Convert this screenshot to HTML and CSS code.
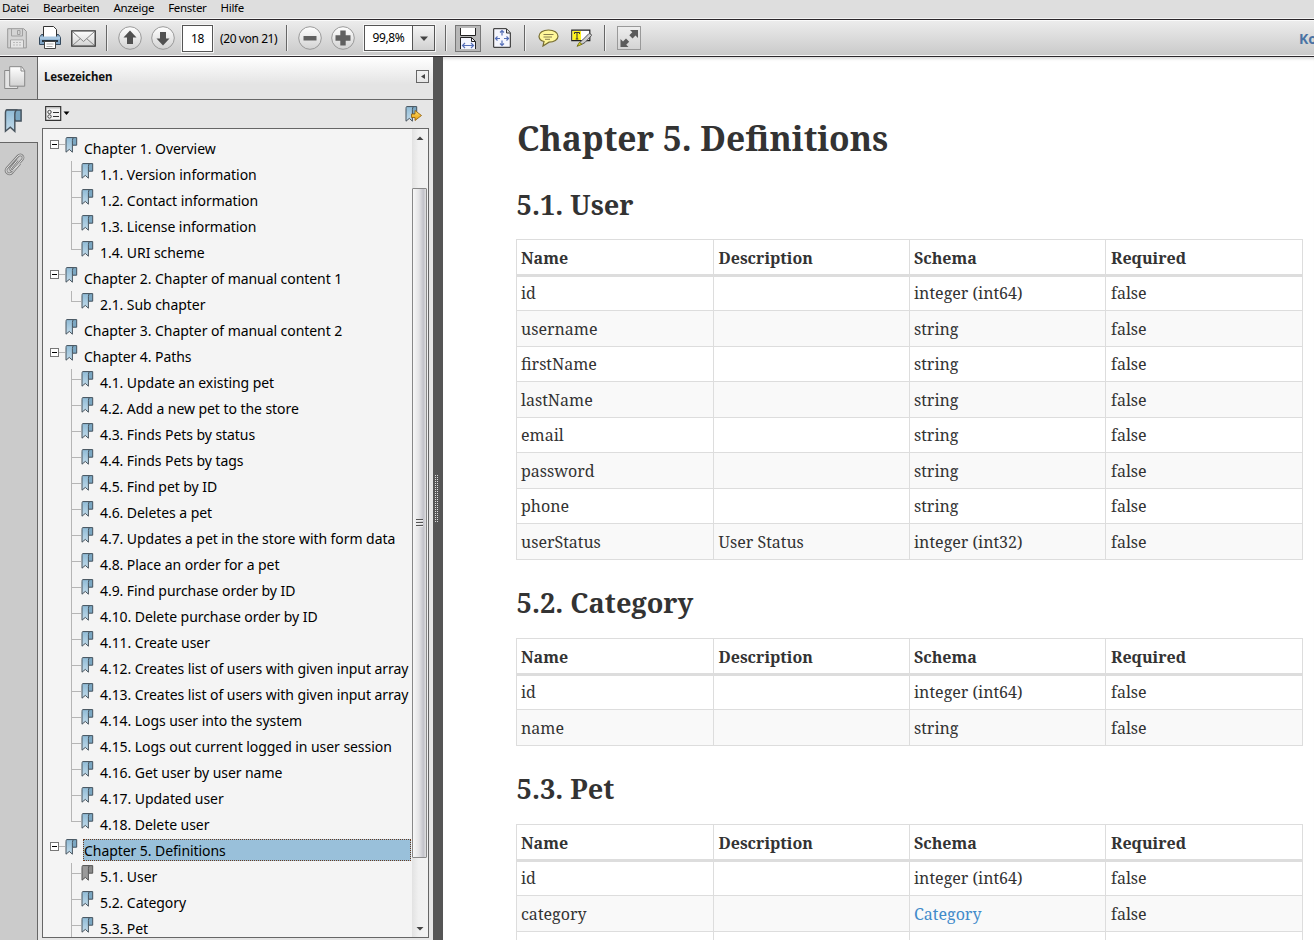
FILE: index.html
```html
<!DOCTYPE html>
<html lang="de">
<head>
<meta charset="utf-8">
<title>Definitions</title>
<link rel="stylesheet" href="styles.css">
</head>
<body>
<svg class="defs" width="0" height="0" aria-hidden="true">
  <defs>
    <linearGradient id="blue" x1="0" y1="0" x2="0" y2="1"><stop offset="0" stop-color="#8fbbd6"/><stop offset="1" stop-color="#c3dbea"/></linearGradient>
    <linearGradient id="silver" x1="0" y1="0" x2="0" y2="1"><stop offset="0" stop-color="#fff"/><stop offset="1" stop-color="#d2d2d2"/></linearGradient>
    <linearGradient id="gold" x1="0" y1="0" x2="0" y2="1"><stop offset="0" stop-color="#ffe06a"/><stop offset="1" stop-color="#e59b0c"/></linearGradient>
    <symbol id="mark" viewBox="0 0 13 17">
      <path class="fold" d="M2.500 .6h9.200v7.600H8z"/>
      <path class="ribbon" d="M1.600 .6h6.800q-1 1.200-1 3v11.600L4.300 12.400 1 15.200V2.500q0-1.200.6-1.900z"/>
    </symbol>
  </defs>
</svg>
<nav class="menu"><span>Datei</span><span>Bearbeiten</span><span>Anzeige</span><span>Fenster</span><span>Hilfe</span></nav>
<div class="toolbar">
  <svg class="ic save" width="20" height="21" viewBox="0 0 20 21"><path d="M.7 .7h16l2.600 2.600v16.600H.7z" fill="#d4d4d4" stroke="#999"/><path d="M4.500 1v7h11V1M10.500 2.500h2.500v4h-2.500zM3.500 20v-8h13v8" fill="none" stroke="#a0a0a0"/><path d="M4 12.500h12v7H4z" fill="#e6e6e6"/><path d="M6 14.500h8M6 17h8" stroke="#bbb" stroke-dasharray="2 1"/></svg>
  <svg class="ic print" width="22" height="24" viewBox="0 0 22 24"><path d="M2.500 8.500h17l2 3v7h-21v-7z" fill="#7fa3c4" stroke="#34495d"/><path d="M4.500 .5h10l3 3v8h-13z" fill="#fff" stroke="#333"/><path d="M1 10.500h20v3H1z" fill="#a9c7e0"/><path d="M3 14h16v2H3z" fill="#26323d"/><path d="M5.500 15.500h11v7h-11z" fill="#fff" stroke="#444"/><path d="M7.500 18h7M7.500 20.500h6" stroke="#aaa"/></svg>
  <svg class="ic mail" width="25" height="17" viewBox="0 0 25 17"><path d="M.8 .8h23.400v15.400H.8z" fill="url(#silver)" stroke="#333" stroke-width="1.300"/><path d="M2 2l10.500 9.500L23 2M2 15l7.500-6.500M23 15l-7.500-6.500" fill="none" stroke="#888"/></svg>
  <i class="sep s1"></i>
  <svg class="ic up" width="24" height="24" viewBox="0 0 24 24"><circle cx="12" cy="12" r="11.300" fill="url(#silver)" stroke="#999"/><path d="M12 4.500l6.500 7H15v6.500H9v-6.500H5.500z" fill="#505050"/></svg>
  <svg class="ic down" width="24" height="24" viewBox="0 0 24 24"><circle cx="12" cy="12" r="11.300" fill="url(#silver)" stroke="#999"/><path d="M12 19.500l6.500-7H15V6H9v6.500H5.500z" fill="#505050"/></svg>
  <span class="pageno">18</span><span class="total">(20 von 21)</span>
  <i class="sep s2"></i>
  <svg class="ic minus" width="24" height="24" viewBox="0 0 24 24"><circle cx="12" cy="12" r="11.300" fill="url(#silver)" stroke="#999"/><path d="M5.500 10h13v4.500h-13z" fill="#606060"/></svg>
  <svg class="ic plus" width="24" height="24" viewBox="0 0 24 24"><circle cx="12" cy="12" r="11.300" fill="url(#silver)" stroke="#999"/><path d="M9.300 4.500h5.400v4.800h4.800v5.400h-4.800v4.800H9.300v-4.800H4.500V9.300h4.800z" fill="#606060"/></svg>
  <span class="zoom"><span class="zoom-value">99,8%</span><span class="zoom-drop"><svg width="8" height="5"><path d="M0 .5h8L4 5z" fill="#444"/></svg></span></span>
  <i class="sep s3"></i>
  <span class="toggle"><svg width="18" height="21" viewBox="0 0 18 21"><path d="M1.500 0v7.500h15V0" fill="#fff" stroke="#222"/><path d="M1.500 21V9.500h11l4 4V21z" fill="#f4f6ff"/><path d="M1.500 21V9.500h11l4 4V21M12.500 9.500v4h4" fill="none" stroke="#222"/><path d="M3.500 17.500h11M6 15l-2.500 2.500L6 20M12 15l2.500 2.500L12 20" fill="none" stroke="#5670b8" stroke-width="1.200"/></svg></span>
  <svg class="ic fit" width="18" height="20" viewBox="0 0 18 20"><path d="M.7 .7h12.800l3.800 4v14.600H.7z" fill="#f5f6fd" stroke="#222"/><path d="M13.500 1v4H17" fill="#ddd" stroke="#333"/><path d="M9 2.500v5M9 17.500v-5M2.500 10.500h4.500M15.500 10.500H11M7 4.500l2-2 2 2M7 15.500l2 2 2-2M4.500 8.500l-2 2 2 2M13.500 8.500l2 2-2 2" fill="none" stroke="#5670b8" stroke-width="1.200"/></svg>
  <i class="sep s4"></i>
  <svg class="ic note" width="21" height="18" viewBox="0 0 21 18"><path d="M10.500 1C16 1 20 3.700 20 7.200s-4 6-9 6L5 17l1-4.500C3 11.700 1 9.800 1 7.200 1 3.700 5 1 10.500 1z" fill="#fff79a" stroke="#776d32" stroke-width="1.200"/><path d="M5.500 5.500h10M5.500 8h8.500M7 10.300h5" stroke="#8a8150"/></svg>
  <svg class="ic mark-text" width="22" height="18" viewBox="0 0 22 18"><path d="M.8 1.200h18v10.500H.8z" fill="#fff" stroke="#222" stroke-width="1.200"/><path d="M1.500 2H10v9H1.500z" fill="#fff21c"/><path d="M3.500 5V3.500h5V5M6 3.500v6.500M4.700 10h2.600" fill="none" stroke="#333"/><path d="M8.500 13.500l3-2.500 6.500-6.500q2.500 0 2.500 2l-6.500 7-3.500 2z" fill="#ccc" stroke="#555"/><path d="M6 17.300l2.500-4 2.500 2z" fill="#ece51d" stroke="#77731a"/></svg>
  <i class="sep s5"></i>
  <span class="expand"><svg width="20" height="20" viewBox="0 0 20 20"><path d="M11 2h8v8l-2.500-2.500-3 3-3.200-3.200 3-3zM1.500 19v-8L4 13.500l3-3 3.200 3.200-3 3L9.500 19z" fill="#5c5c5c"/></svg></span>
  <span class="comment">Ko</span>
</div>
<div class="workspace">
  <aside class="rail">
    <div class="rail-tab"><svg width="22" height="24" viewBox="0 0 22 24"><path d="M.7 4.500h13v18H.7z" fill="#e4e4e4" stroke="#888"/><path d="M5.700 .7h12l3 4v15.500h-15z" fill="url(#silver)" stroke="#888"/><path d="M17 1v4h4" fill="none" stroke="#888"/></svg></div>
    <div class="rail-tab active"><svg class="big-mark" width="19" height="25" viewBox="0 0 13 17"><use href="#mark"/></svg></div>
    <div class="rail-tab clip"><svg width="22" height="24" viewBox="0 0 22 24"><path d="M13.500 7L7 15c-1.200 1.700.9 3.500 2.300 2l9-10.500c2.500-3.200-1.700-6.300-4.300-3.500L3 15c-3 4 2 8 5.300 4.500L16 10.500" fill="none" stroke="#808080" stroke-width="2.600"/><path d="M13.500 7L7 15c-1.200 1.700.9 3.500 2.300 2l9-10.500c2.500-3.200-1.700-6.300-4.300-3.500L3 15c-3 4 2 8 5.300 4.500L16 10.500" fill="none" stroke="#e2e2e2" stroke-width="1"/></svg></div>
  </aside>
  <section class="panel">
    <header class="panel-head"><b>Lesezeichen</b><span class="collapse"><svg width="4" height="5"><path d="M4 0v5L0 2.500z" fill="#444"/></svg></span></header>
    <div class="panel-tools">
      <svg width="25" height="15" viewBox="0 0 25 15"><path d="M.7 .7h15v13.600H.7z" fill="#f4f4f4" stroke="#333" stroke-width="1.200"/><path d="M1 2h14" stroke="#bbb"/><path d="M8 6.500h6M8 10.500h6" stroke="#333"/><circle cx="4.500" cy="6" r="1.700" fill="none" stroke="#444"/><circle cx="4.500" cy="10.500" r="1.700" fill="none" stroke="#444"/><path d="M18.500 5.500h6l-3 3.500z"/></svg>
      <svg class="go" width="17" height="17" viewBox="0 0 17 17"><use href="#mark" width="13" height="17"/><path d="M6.500 8H10V4.500L16.500 9.500 10 14.500V11.500H6.500z" fill="url(#gold)" stroke="#8b5b0a" stroke-width=".8"/></svg>
    </div>
    <div class="tree-box">
      <ul class="tree" id="tree"></ul>
      <div class="scroll">
        <svg width="8" height="4"><path d="M.5 4h7L4 .5z" fill="#444"/></svg>
        <div class="thumb"><i></i><i></i><i></i></div>
        <svg class="arrow-down" width="8" height="4"><path d="M.5 0h7L4 3.500z" fill="#444"/></svg>
      </div>
    </div>
  </section>
  <div class="splitter"><i></i></div>
  <main class="page">
    <h1>Chapter 5. Definitions</h1>
    <h2 class="h-user">5.1. User</h2>
    <table>
      <thead><tr><th>Name</th><th>Description</th><th>Schema</th><th>Required</th></tr></thead>
      <tbody>
        <tr><td>id</td><td></td><td>integer (int64)</td><td>false</td></tr>
        <tr><td>username</td><td></td><td>string</td><td>false</td></tr>
        <tr><td>firstName</td><td></td><td>string</td><td>false</td></tr>
        <tr><td>lastName</td><td></td><td>string</td><td>false</td></tr>
        <tr><td>email</td><td></td><td>string</td><td>false</td></tr>
        <tr><td>password</td><td></td><td>string</td><td>false</td></tr>
        <tr><td>phone</td><td></td><td>string</td><td>false</td></tr>
        <tr><td>userStatus</td><td>User Status</td><td>integer (int32)</td><td>false</td></tr>
      </tbody>
    </table>
    <h2>5.2. Category</h2>
    <table>
      <thead><tr><th>Name</th><th>Description</th><th>Schema</th><th>Required</th></tr></thead>
      <tbody>
        <tr><td>id</td><td></td><td>integer (int64)</td><td>false</td></tr>
        <tr><td>name</td><td></td><td>string</td><td>false</td></tr>
      </tbody>
    </table>
    <h2>5.3. Pet</h2>
    <table>
      <thead><tr><th>Name</th><th>Description</th><th>Schema</th><th>Required</th></tr></thead>
      <tbody>
        <tr><td>id</td><td></td><td>integer (int64)</td><td>false</td></tr>
        <tr><td>category</td><td></td><td><a>Category</a></td><td>false</td></tr>
        <tr><td></td><td></td><td></td><td></td></tr>
      </tbody>
    </table>
  </main>
</div>
<script src="tree.js"></script>
</body>
</html>
```

FILE: styles.css
```css
* { box-sizing: border-box; }
body { margin: 0; width: 1314px; height: 940px; overflow: hidden; background: #fff; display: flex; flex-direction: column; font-family: "Noto Sans", sans-serif; }
svg { display: block; flex: none; }
i { font-style: normal; }
.defs { position: absolute; }
.menu { height: 20px; flex: none; background: #dedede; border-bottom: 1px solid #2b272b; box-shadow: inset 0 -1px #f4f4f4; display: flex; gap: 14px; padding-left: 2px; font: 11.5px/16px "Noto Sans", sans-serif; letter-spacing: -.3px; color: #000; }
.toolbar { height: 37px; flex: none; display: flex; align-items: center; background: linear-gradient(#ededed, #c9c9c9); border-bottom: 1px solid #2b272b; box-shadow: inset 0 1px #fafafa, inset 0 -1px #f7f7f7; padding-left: 7px; white-space: nowrap; overflow: hidden; }
.ic { margin-right: 9px; }
.save { margin-right: 12px; }
.print { margin-right: 10px; }
.mail { margin-right: 10px; }
.sep { width: 2px; height: 26px; background: #666; border-right: 1px solid #f0f0f0; flex: none; }
.s1 { margin-right: 10px; }
.down { margin-right: 7px; }
.pageno { width: 31px; height: 27px; border: 1px solid #555; outline: 1px solid #f5f5f5; background: #fff; font-size: 12px; line-height: 25px; text-align: center; letter-spacing: -.3px; flex: none; }
.total { font-size: 12px; width: 66px; margin-left: 7px; letter-spacing: -.4px; flex: none; }
.s2 { margin-right: 10px; }
.plus { margin-right: 9px; }
.zoom { width: 71px; height: 26px; border: 1px solid #555; outline: 1px solid #f5f5f5; background: #fff; display: flex; flex: none; }
.zoom-value { width: 48px; font-size: 12px; line-height: 24px; text-align: center; letter-spacing: -.4px; border-right: 1px solid #555; }
.zoom-drop { flex: 1; display: flex; align-items: center; justify-content: center; background: linear-gradient(#f4f4f4, #d0d0d0); }
.s3 { margin: 0 8px 0 10px; }
.toggle { width: 26px; height: 27px; background: #b8b8b8; border: 1px solid #777; display: flex; align-items: center; justify-content: center; margin-right: 12px; flex: none; }
.fit { margin-right: 13px; }
.s4 { margin-right: 12px; }
.note { margin-right: 12px; }
.mark-text { margin-right: 11px; }
.s5 { margin-right: 11px; }
.expand { width: 24px; height: 24px; border: 1px solid #999; background: linear-gradient(#eee, #d4d4d4); display: flex; align-items: center; justify-content: center; flex: none; }
.comment { margin-left: 658px; font-weight: 700; font-size: 14px; color: #4a73a4; }
.workspace { flex: 1; min-height: 0; display: flex; }
.rail { width: 38px; flex: none; background: #cbcbcb; border-right: 1px solid #666; }
.rail-tab { height: 43px; border-bottom: 1px solid #666; padding: 9px 0 0 4px; }
.rail-tab.active { width: 38px; background: #e6e6e6; padding-top: 9px; }
.rail-tab.clip { border: 0; padding-top: 10px; }
.ribbon { fill: url(#blue); stroke: #48545e; stroke-width: 1; }
.fold { fill: #7ba7c2; stroke: #44525e; stroke-width: 1; }
.panel { width: 395px; flex: none; background: #e6e6e6; display: flex; flex-direction: column; }
.panel-head { height: 43px; flex: none; background: linear-gradient(#fff, #e4e4e4 65%); border-bottom: 1px solid #666; display: flex; justify-content: space-between; padding: 13px 4px 0 6px; font-size: 11.5px; line-height: 14px; color: #111; }
.panel-head b { letter-spacing: -.1px; }
.collapse { width: 13px; height: 13px; border: 1px solid #666; display: flex; align-items: center; justify-content: center; }
.panel-tools { height: 28px; flex: none; display: flex; justify-content: space-between; padding: 6px 11px 0 7px; }
.tree-box { margin: 0 4px 2px; flex: 1; min-height: 0; border: 1px solid #666; background: #f4f4f4; display: flex; overflow: hidden; }
.tree { list-style: none; margin: 0; padding: 6px 0 0 7px; width: 369px; overflow: hidden; }
.item { height: 26px; display: flex; align-items: flex-start; font-size: 14px; color: #000; }
.item span { white-space: nowrap; height: 22px; line-height: 20px; margin: 2px 1px 0 5px; padding: 2px 0 0 1px; flex: 1; letter-spacing: -.06px; }
.item .bm { margin-top: 2px; }
.toggle-box { width: 9px; height: 9px; border: 1px solid #777; background: #fff; margin-top: 5px; flex: none; display: flex; align-items: center; justify-content: center; }
.toggle-box::after { content: ""; width: 5px; height: 1px; background: #000; }
.toggle-box.none { visibility: hidden; }
.stub { width: 6px; height: 1px; background: #b5b5b5; margin-top: 9px; flex: none; }
.stub.none { visibility: hidden; }
.branch { width: 10px; height: 26px; margin-left: 21px; border-left: 1px solid #b5b5b5; background: linear-gradient(#b5b5b5, #b5b5b5) 0 10px / 10px 1px no-repeat; flex: none; }
.branch.last { height: 11px; }
.selected span { background: #99c0da; outline: 1px dotted #6b3a1c; outline-offset: -1px; }
.current .ribbon { fill: #9a9a9a; stroke: #555; }
.current .fold { fill: #8a8a8a; stroke: #555; }
.scroll { flex: 1; background: linear-gradient(90deg, #e2e2e2, #f0f0f0 40%, #f2f2f2); display: flex; flex-direction: column; align-items: center; padding-top: 7px; }
.thumb { width: 15px; height: 670px; margin: 48px 1px 0 0; border: 1px solid #888; border-radius: 1px; background: linear-gradient(90deg, #f7f7f7, #e4e4e6 45%, #c3c3ca 80%, #e0e0e0); display: flex; flex-direction: column; align-items: center; justify-content: center; gap: 1px; flex: none; }
.thumb i { width: 7px; height: 2px; background: #555; border-bottom: 1px solid #eee; }
.arrow-down { margin-top: 69px; }
.splitter { width: 10px; flex: none; background: #555; display: flex; align-items: center; justify-content: center; }
.splitter i { width: 4px; height: 48px; margin: 0 2px 1px 0; background: repeating-linear-gradient(#555 0 1px, transparent 1px 2px), linear-gradient(90deg, #ddd 0 1px, #555 1px 2px, #ddd 2px 3px, #555 3px); }
.page { flex: 1; background: #fff; box-shadow: inset 0 4px 3px -2px #ddd; padding: 58px 0 0 73px; overflow: hidden; font-family: "Noto Serif", "DejaVu Serif Condensed", "DejaVu Serif", serif; color: #333; }
h1 { margin: 0 0 0 1px; height: 48px; font-size: 33.6px; line-height: 47px; white-space: nowrap; }
h2 { margin: 0 0 0 .6px; height: 78px; padding-top: 23px; font-size: 27.2px; line-height: 40px; white-space: nowrap; }
.h-user { height: 76px; padding-top: 22px; }
table { width: 787px; table-layout: fixed; border-spacing: 0; border-top: 1px solid #ddd; border-left: 1px solid #ddd; font-size: 16px; line-height: 20px; }
th, td { padding: 0 4px; text-align: left; border-right: 1px solid #ddd; border-bottom: 1px solid #ddd; vertical-align: middle; }
th { height: 37px; padding-top: 2px; border-bottom-width: 3px; }
th:nth-child(1) { width: 197px; }
th:nth-child(2), th:nth-child(3) { width: 196px; }
th:nth-child(2), td:nth-child(2) { padding-left: 4.5px; }
th:nth-child(4), td:nth-child(4) { padding-left: 5px; }
td { height: 35px; }
tr:nth-child(even) td { height: 36px; background: #f9f9f9; }
tbody tr:first-child td { height: 34px; padding-bottom: 1px; }
a { color: #428bca; }
```

FILE: tree.js
```js
const sections = [
  ["Chapter 1. Overview", ["1.1. Version information", "1.2. Contact information", "1.3. License information", "1.4. URI scheme"]],
  ["Chapter 2. Chapter of manual content 1", ["2.1. Sub chapter"]],
  ["Chapter 3. Chapter of manual content 2", []],
  ["Chapter 4. Paths", ["4.1. Update an existing pet", "4.2. Add a new pet to the store", "4.3. Finds Pets by status", "4.4. Finds Pets by tags", "4.5. Find pet by ID", "4.6. Deletes a pet", "4.7. Updates a pet in the store with form data", "4.8. Place an order for a pet", "4.9. Find purchase order by ID", "4.10. Delete purchase order by ID", "4.11. Create user", "4.12. Creates list of users with given input array", "4.13. Creates list of users with given input array", "4.14. Logs user into the system", "4.15. Logs out current logged in user session", "4.16. Get user by user name", "4.17. Updated user", "4.18. Delete user"]],
  ["Chapter 5. Definitions", ["5.1. User", "5.2. Category", "5.3. Pet"]]
];
const ribbon =
  `<svg class="bm" width="13" height="17" viewBox="0 0 13 17"><path class="fold" d="M2.500 .6h9.200v7.600H8z"/><path class="ribbon" d="M1.600 .6h6.800q-1 1.200-1 3v11.600L4.300 12.400 1 15.200V2.500q0-1.200.6-1.900z"/></svg>`;
let html = "";
for (const [title, children] of sections) {
  const none = children.length ? "" : " none";
  const open = title.startsWith("Chapter 5");
  html += `<li class="item${open ? " selected" : ""}"><div class="toggle-box${none}"></div><div class="stub${none}"></div>${ribbon}<span>${title}</span></li>`;
  children.forEach((label, i) => {
    const last = !open && i === children.length - 1 ? " last" : "";
    html += `<li class="item${label === "5.1. User" ? " current" : ""}"><div class="branch${last}"></div>${ribbon}<span>${label}</span></li>`;
  });
}
document.getElementById("tree").innerHTML = html;
```
